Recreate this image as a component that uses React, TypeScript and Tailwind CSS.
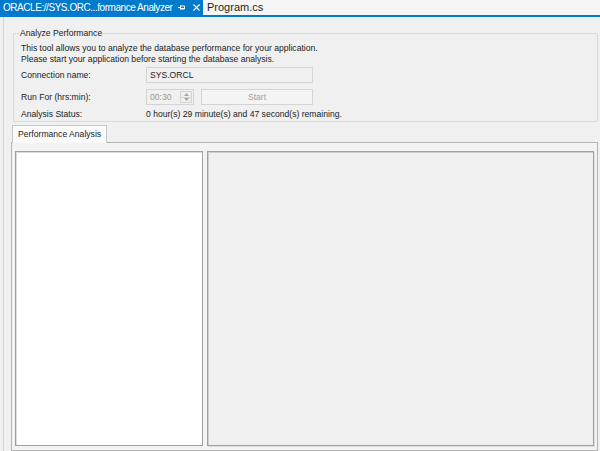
import { X } from 'lucide-react';

function PinIcon() {
  return (
    <svg width="9" height="9" viewBox="0 0 9 9" className="text-white">
      <path d="M1 4.5h2.5M3.5 2.5v4M3.5 3h4v3h-4M3.5 5.5h4" stroke="currentColor" strokeWidth="1" fill="none" />
    </svg>
  );
}

function DocTabs() {
  return (
    <div className="flex h-[17px] bg-[#f5f5f5] border-b-2 border-[#007acc]">
      <div className="flex items-center bg-[#007acc] text-white pl-[3px] pr-[1px] w-[203px] text-[10px] tracking-[-0.45px] leading-none">
        <span className="whitespace-nowrap">ORACLE://SYS.ORC...formance Analyzer</span>
        <span className="ml-auto shrink-0"><PinIcon /></span>
        <X size={11} strokeWidth={2.5} className="ml-[5px] shrink-0" />
      </div>
      <div className="flex items-center px-[4px] text-[11px] leading-none text-[#1e1e1e]">Program.cs</div>
    </div>
  );
}

function Field({ children, className }: { children: React.ReactNode; className?: string }) {
  return (
    <div className={`h-[16px] border border-[#d4d4d4] bg-[#f0f0f0] flex items-center ${className ?? ''}`}>
      {children}
    </div>
  );
}

function AnalyzeGroup() {
  return (
    <div className="relative mt-[16px] ml-[9px] mr-[2px] h-[89px] border border-[#dadada] rounded-[2px]">
      <span className="absolute -top-[7px] left-[5px] px-[1px] bg-[#f0f0f0] leading-[12px]">Analyze Performance</span>
      <div className="pl-[7px] pt-[9px] leading-[11px]">
        <div>This tool allows you to analyze the database performance for your application.</div>
        <div>Please start your application before starting the database analysis.</div>
      </div>
      <div className="flex items-center pl-[7px] mt-[2px]">
        <span className="w-[125px]">Connection name:</span>
        <Field className="w-[167px] pl-[3px]">SYS.ORCL</Field>
      </div>
      <div className="flex items-center pl-[7px] mt-[6px]">
        <span className="w-[125px]">Run For (hrs:min):</span>
        <Field className="w-[48px] pl-[3px] text-[#9a9a9a] relative">
          00:30
          <div className="absolute right-[1px] top-[1px] bottom-[1px] w-[12px] flex flex-col border border-[#d4d4d4]">
            <div className="flex-1 flex items-center justify-center border-b border-[#d4d4d4]">
              <svg width="5" height="3" viewBox="0 0 5 3"><path d="M0 3L2.5 0L5 3Z" fill="#a6a6a6" /></svg>
            </div>
            <div className="flex-1 flex items-center justify-center">
              <svg width="5" height="3" viewBox="0 0 5 3"><path d="M0 0L2.5 3L5 0Z" fill="#a6a6a6" /></svg>
            </div>
          </div>
        </Field>
        <Field className="w-[112px] ml-[7px] justify-center text-[#a0a0a0] border-[#c9c9c9] bg-[#f4f4f4]">Start</Field>
      </div>
      <div className="flex items-center pl-[7px] mt-[3px]">
        <span className="w-[125px]">Analysis Status:</span>
        <span>0 hour(s) 29 minute(s) and 47 second(s) remaining.</span>
      </div>
    </div>
  );
}

function AnalysisTabs() {
  return (
    <div className="flex-1 flex flex-col mt-[3px] ml-[7px] mr-[2px]">
      <div className="flex pl-[1px]">
        <div className="h-[18px] px-[5px] flex items-center bg-[#fbfbfb] border border-b-0 border-[#c6c6c6] -mb-[1px] relative z-10">
          Performance Analysis
        </div>
      </div>
      <div className="flex-1 flex gap-[4px] border border-[#b4b4b4] bg-[#f3f3f3] pl-[3px] pr-[3px] pt-[8px] pb-[4px]">
        <div className="w-[188px] bg-white border border-[#a0a0a0] shadow-[inset_1px_1px_0_#dcdcdc]" />
        <div className="flex-1 bg-[#f0f0f0] border border-[#a0a0a0] shadow-[inset_1px_1px_0_#cfcfcf,1px_1px_0_#e0e0e0]" />
      </div>
    </div>
  );
}

export default function App() {
  return (
    <div className="w-[600px] h-[451px] flex flex-col overflow-hidden bg-[#f0f0f0] text-[8.6px] text-[#1b1b1b]" style={{ fontFamily: '"Liberation Sans", Arial, sans-serif' }}>
      <DocTabs />
      <div className="flex-1 flex flex-col ml-[3px] border-l border-[#d6d6d6]">
        <AnalyzeGroup />
        <AnalysisTabs />
      </div>
    </div>
  );
}
